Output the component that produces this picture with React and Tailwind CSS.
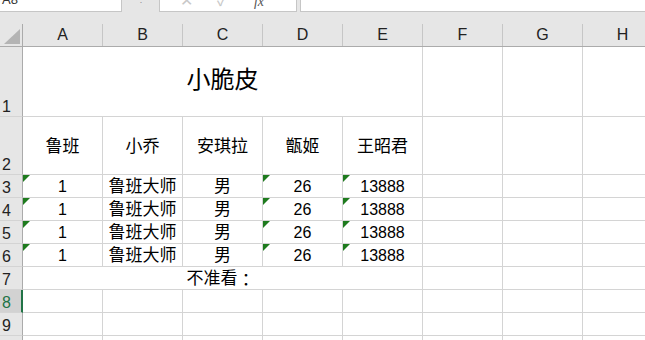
import React from "react";

const COLS = ["A", "B", "C", "D", "E", "F", "G", "H"];
const FONT = { fontFamily: '"Liberation Sans", "Noto Sans CJK SC", sans-serif' };

const heroes = ["鲁班", "小乔", "安琪拉", "甑姬", "王昭君"];
const dataRows = [3, 4, 5, 6].map((n) => ({ n, cells: ["1", "鲁班大师", "男", "26", "13888"] }));
// cells with the little green "number stored as text" flag
const flagged = [0, 3, 4];

function Flag() {
    return (
        <svg className="absolute left-0 top-0" width="7" height="7" viewBox="0 0 7 7">
            <polygon points="0,0 7,0 0,7" fill="#1e7b1e" />
        </svg>
    );
}

function RowHead({ n, h, active }) {
    return (
        <div
            className={`shrink-0 w-[23px] flex items-end pl-[2px] pb-[1px] text-[16px] leading-none border-b border-[#d4d4d4] ${
                active
                    ? "bg-[#d2d2d2] text-[#217346] border-r-2 border-r-[#217346]"
                    : "bg-[#e6e6e6] text-[#222] border-r border-r-[#ababab]"
            }`}
            style={{ height: h }}
        >
            {n}
        </div>
    );
}

function Cell({ w = 80, children, className = "" }) {
    return (
        <div
            className={`relative shrink-0 flex items-center justify-center border-r border-b border-[#d4d4d4] text-[16px] text-black ${className}`}
            style={{ width: w }}
        >
            {children}
        </div>
    );
}

function Row({ n, h, active, children }) {
    return (
        <div className="flex" style={{ height: h }}>
            <RowHead n={n} h={h} active={active} />
            {children}
        </div>
    );
}

function EmptyCells({ from }) {
    return COLS.slice(from).map((c) => <Cell key={c} />);
}

export default function App() {
    return (
        <div className="w-[645px] h-[340px] overflow-hidden bg-white" style={FONT}>
            {/* formula bar, cut off at the top */}
            <div className="h-[24px] bg-[#e6e6e6] flex items-start">
                <div className="w-[122px] h-[12px] bg-white border-r border-b border-[#c6c6c6] overflow-hidden">
                    <div className="text-[13px] leading-none text-[#333] pl-[2px] mt-[-7px]">A8</div>
                </div>
                <div className="w-[37px] flex justify-center text-[#9a9a9a] text-[10px] leading-none mt-[-6px]">⋮</div>
                <div className="w-[138px] h-[12px] bg-white border-r border-b border-l border-[#c6c6c6] flex items-end overflow-hidden text-[16px] leading-none">
                    <span className="ml-[20px] text-[#c8c8c8] mb-[2px]">✕</span>
                    <span className="ml-[24px] text-[#c8c8c8] mb-[2px]">✓</span>
                    <span className="ml-[26px] text-[#555] italic text-[14px] mb-[2px]" style={{ fontFamily: '"Liberation Serif", serif' }}>fx</span>
                </div>
                <div className="flex-1 h-[12px] ml-[3px] bg-white border-l border-b border-[#c6c6c6]" />
            </div>

            {/* column headers */}
            <div className="flex h-[23px] bg-[#e6e6e6] border-b border-[#ababab]">
                <div className="relative shrink-0 w-[23px] border-r border-[#ababab]">
                    <svg className="absolute left-[4px] top-[5px]" width="16" height="15" viewBox="0 0 16 15">
                        <polygon points="16,0 16,15 0,15" fill="#b4b4b4" />
                    </svg>
                </div>
                {COLS.map((c) => (
                    <div
                        key={c}
                        className="shrink-0 w-[80px] flex items-center justify-center text-[16px] text-[#222] border-r border-[#c6c6c6]"
                    >
                        {c}
                    </div>
                ))}
            </div>

            <Row n="1" h={70}>
                <Cell w={400} className="text-[24px] pb-[4px]">小脆皮</Cell>
                <EmptyCells from={5} />
            </Row>

            <Row n="2" h={58}>
                {heroes.map((name) => (
                    <Cell key={name} className="text-[17px] pt-[2px]">{name}</Cell>
                ))}
                <EmptyCells from={5} />
            </Row>

            {dataRows.map((r) => (
                <Row key={r.n} n={String(r.n)} h={23}>
                    {r.cells.map((v, i) => (
                        <Cell key={i} className={`pt-[2px] ${i === 1 || i === 2 ? "text-[17px]" : ""}`}>
                            {flagged.includes(i) && <Flag />}
                            {v}
                        </Cell>
                    ))}
                    <EmptyCells from={5} />
                </Row>
            ))}

            <Row n="7" h={23}>
                <Cell w={400} className="text-[17px] pt-[2px] pr-[4px]">
                    不准看
                    <span style={{ fontFamily: '"Noto Sans CJK JP", sans-serif' }}>：</span>
                </Cell>
                <EmptyCells from={5} />
            </Row>

            <Row n="8" h={23} active>
                <EmptyCells from={0} />
            </Row>

            <Row n="9" h={23}>
                <EmptyCells from={0} />
            </Row>

            <Row n="10" h={23}>
                <EmptyCells from={0} />
            </Row>
        </div>
    );
}
